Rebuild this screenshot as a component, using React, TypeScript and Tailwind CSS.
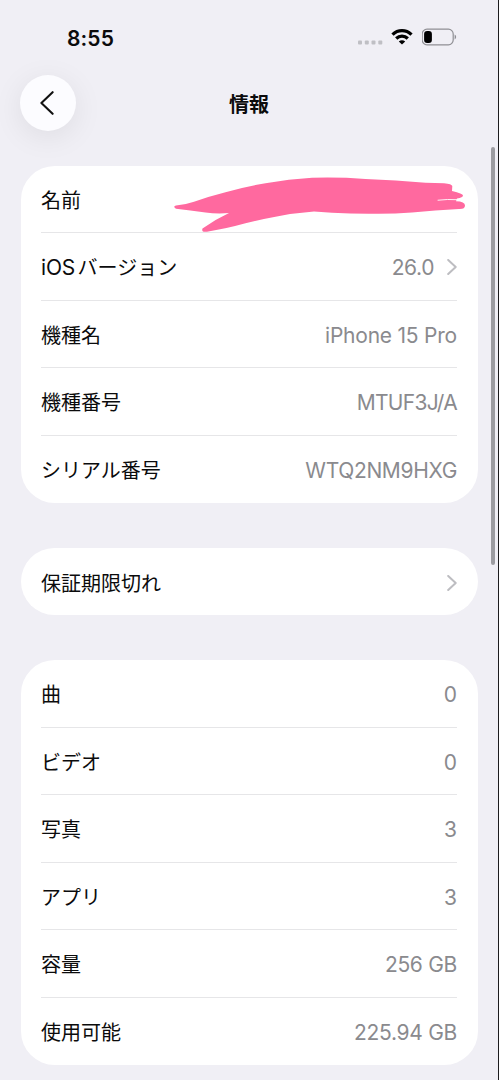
import React from 'react'

type RowProps = {
  label: React.ReactNode
  value?: string
  spacing?: string
  arrow?: boolean
  last?: boolean
  children?: React.ReactNode
}

function Chevron() {
  return (
    <svg className="ml-[13px] mt-[2px] w-[10px] h-[16px]" viewBox="0 0 10 16" fill="none">
      <path d="M1.2 1 L8.7 8 L1.2 15" stroke="#bdbdc1" strokeWidth="2" strokeLinecap="round" strokeLinejoin="round" />
    </svg>
  )
}

function Row({ label, value, spacing = '', arrow, last, children }: RowProps) {
  return (
    <li className={`relative flex h-[67.5px] items-center justify-between ${last ? '' : 'border-b-[1.5px] border-[#e6e6e8]'}`}>
      <span className="pt-[4px] text-[20px] leading-[30px] text-[#0b0b0c]">{label}</span>
      <div className="flex items-center">
        {value && <span className={`pt-[4px] text-[21px] leading-[30px] text-[#8a8a8e] ${spacing}`}>{value}</span>}
        {arrow && <Chevron />}
      </div>
      {children}
    </li>
  )
}

function Card({ children }: { children: React.ReactNode }) {
  return <ul className="rounded-[33.75px] bg-white pl-[20.5px] pr-[20.5px]">{children}</ul>
}

function StatusBar() {
  return (
    <div className="flex h-[74px] items-center justify-between pl-[67px] pr-[40px]">
      <span className="pt-[3px] text-[21px] font-semibold leading-[30px] tracking-[0.1px] text-[#0b0b0c]">8:55</span>
      <div className="flex items-center">
        <svg className="mt-[11px] w-[26px] h-[5px]" viewBox="0 0 26 5" fill="#bfbfc4">
          <rect x="0" y="0.5" width="4" height="4" rx="1" />
          <rect x="6.8" y="0.5" width="4" height="4" rx="1" />
          <rect x="13.5" y="0.5" width="4" height="4" rx="1" />
          <rect x="20.3" y="0.5" width="4" height="4" rx="1" />
        </svg>
        <svg className="ml-[7px] w-[22px] h-[16px]" viewBox="0 0 22 16" fill="none" stroke="#000" strokeWidth="3.3">
          <path d="M1.5 5.6 C7 0.4 15 0.4 20.5 5.6" />
          <path d="M5.2 9.5 C8.5 6.4 13.5 6.4 16.8 9.5" />
          <path d="M11 15.6 L7.8 12.5 C9.6 10.9 12.4 10.9 14.2 12.5 Z" fill="#000" stroke="none" />
        </svg>
        <svg className="ml-[9px] w-[36px] h-[18px]" viewBox="0 0 36 18" fill="none">
          <rect x="0.2" y="1.2" width="31" height="15.6" rx="4.8" stroke="#8f8f94" strokeWidth="1.2" />
          <rect x="2.1" y="3.1" width="7.8" height="11.8" rx="3" fill="#000" />
          <path d="M32.6 6.6 C34.6 7.4 34.6 10.6 32.6 11.5 Z" fill="#8f8f94" />
        </svg>
      </div>
    </div>
  )
}

function Header() {
  return (
    <header className="grid h-[58px] grid-cols-[56px_1fr_56px] items-center px-[20px]">
      <button className="flex h-[56px] w-[56px] items-center justify-center rounded-full bg-[#fcfcff] shadow-[0_6px_30px_rgba(0,0,0,0.08)]">
        <svg className="mr-[3px] w-[14px] h-[24px]" viewBox="0 0 14 24" fill="none">
          <path d="M12.6 1.2 L1.4 12 L12.6 22.8" stroke="#111" strokeWidth="2.1" strokeLinecap="round" strokeLinejoin="round" />
        </svg>
      </button>
      <h1 className="pt-[3px] text-center text-[20px] font-bold leading-[30px] text-[#0b0b0c]">情報</h1>
    </header>
  )
}

// marker stroke hiding the device name
function Scribble() {
  return (
    <svg className="absolute left-[131.5px] top-[10px] h-[58px] w-[294px]" viewBox="0 0 294 58" fill="#ff699f">
      <path d="M3 29.5 Q13 28.5 21 25.7 Q36 20.5 52.5 16.3 Q72 10.5 92.5 7.3 Q116 3 139 1.8 Q166 1 192.5 3 Q223 4 252.5 6.8 L271 7.2 Q279 8 279.3 10 L279 15 Q290 17.5 290 19.5 Q290 21.5 284 22.5 L283 25.3 Q292 25.5 292 29.5 Q292 33.3 286 33 Q262 34 239 36.5 Q219 38 199 37.7 Q179 37.8 159 36.7 L141 35.5 Q121 37 102.5 40.7 Q87 43.5 72.5 47.3 Q52 53 34 55.7 Q28 56.5 29.5 52.5 Q42 43.5 56 37 Q44 38 32.5 36.5 Q17 34.5 3 32.8 Q-0.5 30.5 3 29.5 Z" />
      <path d="M265 24.2 Q274 23 285 23.7" fill="none" stroke="#fff" strokeWidth="0.9" strokeLinecap="round" />
    </svg>
  )
}

export default function App() {
  return (
    <div className="relative h-[1080px] w-[499px] overflow-hidden border-r border-[#1c1c1e] bg-[#f0eff5] font-[Inter,'Noto_Sans_CJK_JP',sans-serif]">
      <StatusBar />
      <Header />
      <main className="flex flex-col gap-[44.7px] pl-[20.5px] pr-[20.5px] pt-[33.7px]">
        <Card>
          <Row label="名前">
            <Scribble />
          </Row>
          <Row label={<><span className="mr-[2.5px] text-[21px] tracking-[-0.2px]">iOS</span>バージョン</>} value="26.0" spacing="tracking-[-0.4px]" arrow />
          <Row label="機種名" value="iPhone 15 Pro" spacing="tracking-[-0.22px]" />
          <Row label="機種番号" value="MTUF3J/A" spacing="tracking-[-0.7px]" />
          <Row label="シリアル番号" value="WTQ2NM9HXG" spacing="tracking-[-0.35px]" last />
        </Card>
        <Card>
          <Row label="保証期限切れ" arrow last />
        </Card>
        <Card>
          <Row label="曲" value="0" />
          <Row label="ビデオ" value="0" />
          <Row label="写真" value="3" />
          <Row label="アプリ" value="3" />
          <Row label="容量" value="256 GB" spacing="tracking-[-0.3px]" />
          <Row label="使用可能" value="225.94 GB" spacing="tracking-[-0.3px]" last />
        </Card>
      </main>
      {/* scroll indicator */}
      <div className="absolute right-[3px] top-[147px] h-[418px] w-[4px] rounded-full bg-[#9c9ca1]" />
    </div>
  )
}
